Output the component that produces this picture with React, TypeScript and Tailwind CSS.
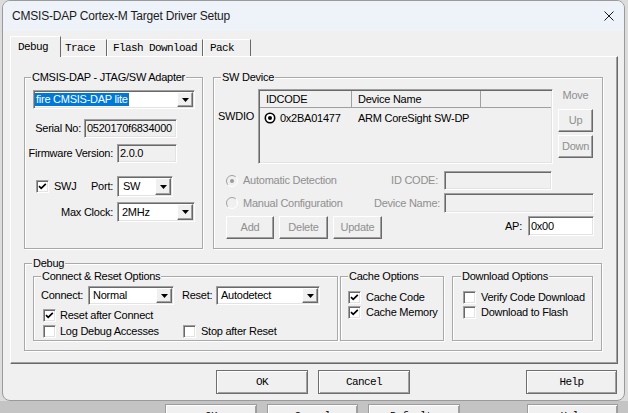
import React from 'react';

const ui = "font-['Liberation_Sans',Arial,sans-serif] text-[11px] tracking-[-0.25px] leading-[13px]";
const mono = "font-['Liberation_Mono','Courier_New',monospace] text-[11px] tracking-[-0.6px]";
const sunken =
  'border border-t-[#a0a0a0] border-l-[#a0a0a0] border-b-white border-r-white shadow-[inset_1px_1px_0_#696969,inset_-1px_-1px_0_#e3e3e3]';
const raised =
  'border border-t-white border-l-white border-r-[#696969] border-b-[#696969] shadow-[inset_-1px_-1px_0_#a0a0a0]';
const etched = 'border border-[#a9a9a9] shadow-[1px_1px_0_#fff,inset_1px_1px_0_#fff]';
const dim = 'text-[#8f8f8f]';

function Combo({ className, children }: { className: string; children: React.ReactNode }) {
  return (
    <div className={`${sunken} bg-white p-[1px] flex shrink-0 ${className}`}>
      <div className="flex-1 flex items-center pl-[1px] overflow-hidden whitespace-nowrap">{children}</div>
      <div className={`${raised} bg-[#f0f0f0] w-[16px] flex items-center justify-center`}>
        <svg width="7" height="4" viewBox="0 0 7 4">
          <path d="M0 0h7L3.5 4z" fill="#000" />
        </svg>
      </div>
    </div>
  );
}

function Check({ on }: { on?: boolean }) {
  return (
    <div className={`w-[13px] h-[13px] shrink-0 bg-white ${sunken}`}>
      {on && (
        <svg width="11" height="11" viewBox="0 0 11 11" className="block">
          <path d="M2 5.2l2.2 2.2L8.8 2.8" stroke="#000" strokeWidth="1.7" fill="none" />
        </svg>
      )}
    </div>
  );
}

function Radio({ on }: { on?: boolean }) {
  return (
    <svg width="12" height="12" viewBox="0 0 12 12" className="shrink-0">
      <circle cx="6" cy="6" r="5.5" fill="#f0f0f0" />
      <path d="M2.11 9.89A5.5 5.5 0 0 1 9.89 2.11" stroke="#a0a0a0" fill="none" />
      <path d="M9.89 2.11A5.5 5.5 0 0 1 2.11 9.89" stroke="#fff" fill="none" />
      {on && <circle cx="6" cy="6" r="2" fill="#9a9a9a" />}
    </svg>
  );
}

function Group({ title, className, legend, children }: { title: string; className: string; legend: string; children?: React.ReactNode }) {
  return (
    <div className={`relative shrink-0 ${etched} ${className}`}>
      <span className={`absolute -top-[7px] px-[1px] bg-[#f0f0f0] whitespace-nowrap ${legend}`}>{title}</span>
      {children}
    </div>
  );
}

function Btn({ className, children }: { className: string; children: React.ReactNode }) {
  return <div className={`${raised} bg-[#f0f0f0] flex items-center justify-center ${dim} ${className}`}>{children}</div>;
}

function DlgBtn({ className, children }: { className: string; children: React.ReactNode }) {
  return (
    <div
      className={`border border-[#6e6e6e] shadow-[inset_1px_1px_0_#fff,inset_-1px_-1px_0_#a0a0a0] bg-[#f0f0f0] flex items-center justify-center ${mono} ${className}`}
    >
      {children}
    </div>
  );
}

export default function App() {
  return (
    <div className={`w-[628px] h-[413px] overflow-hidden bg-[#dcdcdc] flex flex-col text-black ${ui}`}>
      <div className="ml-[2px] w-[623px] h-[401px] shrink-0 flex flex-col bg-[#f0f0f0] border border-[#9a9a9a] rounded-[8px] overflow-hidden">
        {/* title bar */}
        <div className="h-[30px] shrink-0 bg-[#eef2f9] flex items-center pl-[9px] pr-[10px]">
          <span className="font-['Liberation_Sans',Arial,sans-serif] text-[12px] tracking-[-0.2px] text-[#1b1b1b]">
            CMSIS-DAP Cortex-M Target Driver Setup
          </span>
          <svg className="ml-auto" width="10" height="10" viewBox="0 0 10 10">
            <path d="M0.5 0.5l9 9M9.5 0.5l-9 9" stroke="#1b1b1b" strokeWidth="1" />
          </svg>
        </div>

        <div className="flex-1 flex flex-col pl-[7px] pt-[5px]">
          {/* tabs */}
          <div className={`flex items-end h-[20px] relative z-10 ${mono}`}>
            <div className="h-[21px] -mb-[1px] w-[51px] bg-[#f0f0f0] border-t border-l border-r border-t-white border-l-white border-r-[#696969] pl-[7px] flex items-center">
              Debug
            </div>
            <div className="h-[17px] w-[46px] border-t border-r border-t-white border-r-[#696969] pl-[4px] flex items-center">
              Trace
            </div>
            <div className="h-[17px] w-[96px] border-t border-l border-r border-t-white border-l-white border-r-[#696969] pl-[5px] flex items-center">
              Flash Download
            </div>
            <div className="h-[17px] w-[48px] border-t border-l border-r border-t-white border-l-white border-r-[#696969] pl-[6px] flex items-center">
              Pack
            </div>
          </div>

          {/* tab panel */}
          <div className={`w-[608px] h-[308px] shrink-0 ${raised} pl-[13px] pt-[20px]`}>
            <div className="flex gap-[10px]">
              {/* adapter */}
              <Group title="CMSIS-DAP - JTAG/SW Adapter" legend="left-[6px]" className="w-[179px] h-[172px]">
                <div className="flex flex-col">
                  <Combo className="ml-[8px] mt-[12px] w-[162px] h-[19px]">
                    <span className="bg-[#0078d7] text-white px-[1px] -ml-[1px]">fire CMSIS-DAP lite</span>
                  </Combo>
                  <div className="flex items-center mt-[10px]">
                    <div className="w-[56px] text-right whitespace-nowrap">Serial No:</div>
                    <div className={`ml-[3px] w-[93px] h-[19px] ${sunken} bg-[#f0f0f0] flex items-center pl-[2px]`}>
                      0520170f6834000
                    </div>
                  </div>
                  <div className="flex items-center mt-[6px]">
                    <div className="w-[88px] text-right whitespace-nowrap">Firmware Version:</div>
                    <div className={`ml-[4px] w-[60px] h-[19px] ${sunken} bg-[#f0f0f0] flex items-center pl-[2px]`}>
                      2.0.0
                    </div>
                  </div>
                  <div className="flex items-center mt-[13px] h-[21px]">
                    <div className="w-[92px] flex items-center pl-[11px]">
                      <Check on />
                      <span className="ml-[5px]">SWJ</span>
                      <span className="ml-auto pr-[4px]">Port:</span>
                    </div>
                    <Combo className="w-[56px] h-[21px]">
                      <span className="pl-[3px]">SW</span>
                    </Combo>
                  </div>
                  <div className="flex items-center mt-[5px]">
                    <div className="w-[92px] text-right pr-[4px] whitespace-nowrap">Max Clock:</div>
                    <Combo className="w-[78px] h-[20px]">
                      <span className="pl-[2px]">2MHz</span>
                    </Combo>
                  </div>
                </div>
              </Group>

              {/* SW device */}
              <Group title="SW Device" legend="left-[7px]" className="w-[390px] h-[172px]">
                <div className="flex mt-[11px]">
                  <div className="w-[44px] pl-[4px] pt-[21px]">SWDIO</div>
                  <div className={`w-[295px] h-[75px] ${sunken} bg-[#f0f0f0] p-[1px]`}>
                    <div className="flex h-[17px] border-b border-[#a0a0a0]">
                      <div className="w-[92px] border-r border-[#a0a0a0] pl-[6px] flex items-center">IDCODE</div>
                      <div className="w-[129px] border-r border-[#a0a0a0] pl-[6px] flex items-center">Device Name</div>
                      <div className="flex-1" />
                    </div>
                    <div className="flex items-center h-[18px] mt-[1px]">
                      <div className="w-[92px] pl-[4px] flex items-center">
                        <svg width="12" height="12" viewBox="0 0 12 12">
                          <circle cx="6" cy="6" r="4.7" stroke="#000" strokeWidth="1.6" fill="#fff" />
                          <circle cx="6" cy="6" r="2" fill="#000" />
                        </svg>
                        <span className="ml-[4px]">0x2BA01477</span>
                      </div>
                      <div className="pl-[6px]">ARM CoreSight SW-DP</div>
                    </div>
                  </div>
                  <div className="ml-[5px] w-[35px] flex flex-col">
                    <div className={`text-center ${dim}`}>Move</div>
                    <Btn className="mt-[7px] h-[23px]">Up</Btn>
                    <Btn className="mt-[3px] h-[23px]">Down</Btn>
                  </div>
                </div>

                <div className="flex items-center mt-[7px] h-[19px]">
                  <div className={`w-[160px] pl-[12px] flex items-center ${dim}`}>
                    <Radio on />
                    <span className="ml-[5px] whitespace-nowrap">Automatic Detection</span>
                  </div>
                  <div className={`w-[64px] text-right whitespace-nowrap ${dim}`}>ID CODE:</div>
                  <div className={`ml-[6px] w-[108px] h-[19px] ${sunken} bg-[#f0f0f0]`} />
                </div>
                <div className="flex items-center mt-[3px] h-[20px]">
                  <div className={`w-[160px] pl-[12px] flex items-center ${dim}`}>
                    <Radio />
                    <span className="ml-[5px] whitespace-nowrap">Manual Configuration</span>
                  </div>
                  <div className={`w-[64px] text-right whitespace-nowrap ${dim}`}>Device Name:</div>
                  <div className={`ml-[6px] w-[150px] h-[20px] ${sunken} bg-[#f0f0f0]`} />
                </div>
                <div className="flex items-start mt-[3px]">
                  <div className="pl-[12px] flex gap-[5px]">
                    <Btn className="w-[48px] h-[23px]">Add</Btn>
                    <Btn className="w-[49px] h-[23px]">Delete</Btn>
                    <Btn className="w-[49px] h-[23px]">Update</Btn>
                  </div>
                  <div className="ml-auto pr-[8px] flex items-center h-[20px]">
                    <span>AP:</span>
                    <div className={`ml-[6px] w-[66px] h-[20px] ${sunken} bg-white flex items-center pl-[2px]`}>0x00</div>
                  </div>
                </div>
              </Group>
            </div>

            {/* debug */}
            <Group title="Debug" legend="left-[7px]" className="mt-[14px] w-[578px] h-[88px]">
              <div className="flex mt-[12px]">
                <Group title="Connect & Reset Options" legend="left-[7px]" className="ml-[8px] w-[305px] h-[65px]">
                  <div className="flex items-center mt-[9px] h-[19px]">
                    <div className="w-[54px] pl-[7px]">Connect:</div>
                    <Combo className="w-[86px] h-[19px]">
                      <span className="pl-[2px]">Normal</span>
                    </Combo>
                    <div className="w-[42px] pl-[8px]">Reset:</div>
                    <Combo className="w-[104px] h-[19px]">
                      <span className="pl-[2px]">Autodetect</span>
                    </Combo>
                  </div>
                  <div className="flex items-center mt-[4px] h-[13px] pl-[9px]">
                    <Check on />
                    <span className="ml-[4px]">Reset after Connect</span>
                  </div>
                  <div className="flex items-center mt-[3px] h-[13px]">
                    <div className="w-[149px] pl-[9px] flex items-center">
                      <Check />
                      <span className="ml-[4px]">Log Debug Accesses</span>
                    </div>
                    <Check />
                    <span className="ml-[5px]">Stop after Reset</span>
                  </div>
                </Group>
                <Group title="Cache Options" legend="left-[7px]" className="ml-[2px] w-[104px] h-[65px]">
                  <div className="flex items-center mt-[14px] h-[13px] pl-[7px]">
                    <Check on />
                    <span className="ml-[5px]">Cache Code</span>
                  </div>
                  <div className="flex items-center mt-[2px] h-[13px] pl-[7px]">
                    <Check on />
                    <span className="ml-[5px]">Cache Memory</span>
                  </div>
                </Group>
                <Group title="Download Options" legend="left-[8px]" className="ml-[8px] w-[141px] h-[65px]">
                  <div className="flex items-center mt-[14px] h-[13px] pl-[10px]">
                    <Check />
                    <span className="ml-[5px]">Verify Code Download</span>
                  </div>
                  <div className="flex items-center mt-[2px] h-[13px] pl-[10px]">
                    <Check />
                    <span className="ml-[5px]">Download to Flash</span>
                  </div>
                </Group>
              </div>
            </Group>
          </div>

          {/* dialog buttons */}
          <div className="flex mt-[6px] ml-[206px]">
            <DlgBtn className="w-[92px] h-[24px]">OK</DlgBtn>
            <DlgBtn className="ml-[10px] w-[92px] h-[24px]">Cancel</DlgBtn>
            <DlgBtn className="ml-[116px] w-[91px] h-[24px]">Help</DlgBtn>
          </div>
        </div>
      </div>

      {/* window behind */}
      <div className="flex-1 bg-[#c4c4c4] flex pt-[3px] pl-[165px]">
        <DlgBtn className="w-[92px] h-[24px] border-[#9c9c9c] bg-[#e1e1e1]">OK</DlgBtn>
        <DlgBtn className="ml-[10px] w-[91px] h-[24px] border-[#9c9c9c] bg-[#e1e1e1]">Cancel</DlgBtn>
        <DlgBtn className="ml-[10px] w-[92px] h-[24px] border-[#9c9c9c] bg-[#e1e1e1]">Defaults</DlgBtn>
        <DlgBtn className="ml-[67px] w-[91px] h-[24px] border-[#9c9c9c] bg-[#e1e1e1]">Help</DlgBtn>
      </div>
    </div>
  );
}
